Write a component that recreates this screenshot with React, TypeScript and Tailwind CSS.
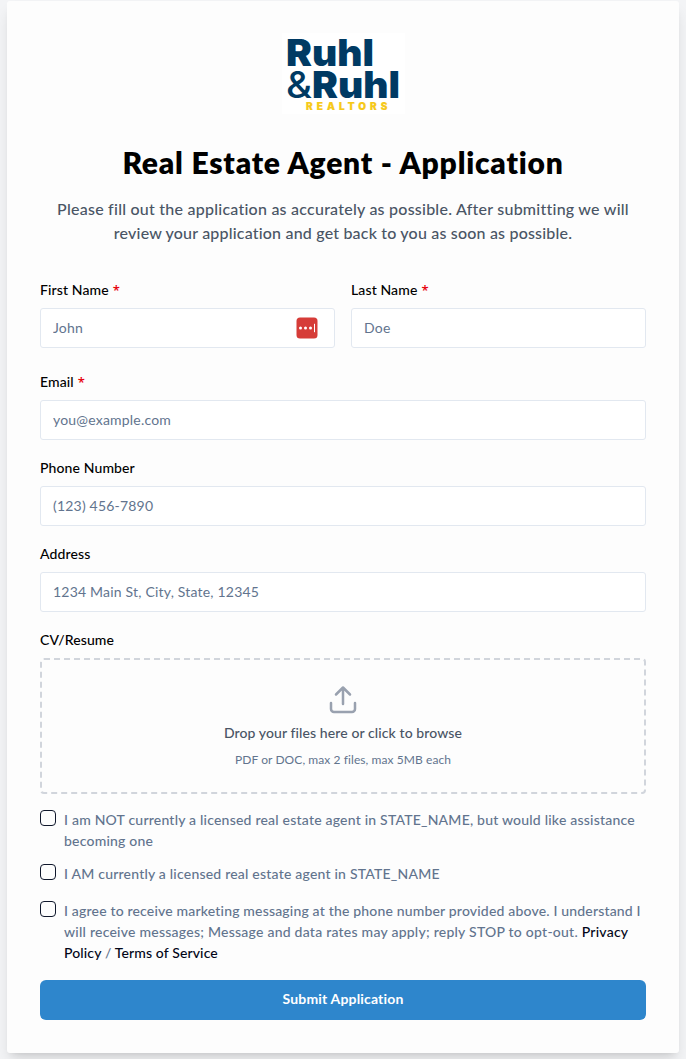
import type { ReactNode } from "react";

function Field({ label, placeholder, required, badge }: { label: string; placeholder: string; required?: boolean; badge?: ReactNode }) {
  return (
    <label className="block flex-1">
      <span className="flex h-5 items-center gap-1 text-sm font-medium tracking-[0.12px] text-black">
        {label}
        {required && <span className="font-['Open_Sans'] text-[13px] font-semibold text-red-600">*</span>}
      </span>
      <span className="mt-2 flex h-10 items-center rounded-[3px] border border-slate-200 bg-white pl-3 pr-4">
        <input placeholder={placeholder} className="min-w-0 flex-1 bg-transparent text-sm tracking-[0.2px] outline-none placeholder:text-slate-500" />
        {badge}
      </span>
    </label>
  );
}

function Check({ children }: { children: ReactNode }) {
  return (
    <div className="flex gap-2">
      <input type="checkbox" className="h-4 w-4 shrink-0 appearance-none rounded border border-slate-900" />
      <div className="-mt-px mb-px text-sm leading-[21px] font-medium tracking-[0.21px] whitespace-nowrap text-slate-500">{children}</div>
    </div>
  );
}

export default function App() {
  return (
    <div className="h-[1059px] overflow-hidden bg-[#f3f4f6] px-[7px] pt-px font-['Lato','Noto_Sans',sans-serif]">
      <main className="h-[1052px] rounded-[3px] bg-[#fdfdfd] px-[33px] pt-8 shadow-[0_10px_15px_-3px_rgb(0_0_0/0.12),0_4px_6px_-4px_rgb(0_0_0/0.12)]">
        <svg viewBox="0 0 123 81" className="mx-auto h-[81px] w-[123px] overflow-visible" fontFamily="Inter, sans-serif">
          <rect width="123" height="81" fill="#fff" />
          <g fill="#003a63" fontWeight="900">
            <text x="4" y="33" fontSize="37" textLength="88" lengthAdjust="spacingAndGlyphs">Ruhl</text>
            <text x="4" y="65" fontSize="37" fontWeight="500" textLength="26" lengthAdjust="spacingAndGlyphs">&amp;</text>
            <text x="30" y="65" fontSize="37" textLength="88" lengthAdjust="spacingAndGlyphs">Ruhl</text>
          </g>
          <text x="24" y="77" fontSize="10" fontWeight="900" fill="#f6c919" stroke="#f6c919" strokeWidth=".2" textLength="81.5">REALTORS</text>
        </svg>
        <h1 className="mt-[30px] text-center text-[30px] leading-9 font-extrabold tracking-[0.78px] whitespace-nowrap text-black">Real Estate Agent - Application</h1>
        <p className="mt-[17px] text-center text-base leading-6 font-medium whitespace-nowrap text-gray-600">
          <span className="block tracking-[0.235px]">Please fill out the application as accurately as possible. After submitting we will</span>
          <span className="block tracking-[0.19px]">review your application and get back to you as soon as possible.</span>
        </p>
        <form className="mt-[35px]">
          <div className="flex gap-4">
            <Field
              label="First Name"
              placeholder="John"
              required
              badge={
                <svg viewBox="0 0 22 22" className="h-[22px] w-[22px]">
                  <rect x=".5" y=".5" width="21" height="21" rx="3.5" fill="#d63c38" />
                  <g fill="#fff">
                    <circle cx="4.5" cy="11" r="1.5" />
                    <circle cx="9.5" cy="11" r="1.5" />
                    <circle cx="14.5" cy="11" r="1.5" />
                    <rect x="18" y="6.8" width="1" height="8.4" />
                  </g>
                </svg>
              }
            />
            <Field label="Last Name" placeholder="Doe" required />
          </div>
          <div className="mt-6 flex flex-col gap-[18px]">
            <Field label="Email" placeholder="you@example.com" required />
            <Field label="Phone Number" placeholder="(123) 456-7890" />
            <Field label="Address" placeholder="1234 Main St, City, State, 12345" />
            <div>
              <div className="h-5 text-sm leading-5 font-medium tracking-[0.12px] text-black">CV/Resume</div>
              <div className="mt-2 flex h-[136px] flex-col items-center rounded border-2 border-dashed border-gray-300 pt-6">
                <svg viewBox="0 0 32 32" className="h-8 w-8 fill-none stroke-gray-400" strokeWidth="2.5" strokeLinecap="round" strokeLinejoin="round">
                  <path d="M16 20V4M9 10.5l7-7 7 7M4 19v6a3 3 0 0 0 3 3h18a3 3 0 0 0 3-3v-6" />
                </svg>
                <div className="mt-[7px] text-sm leading-5 font-medium tracking-[0.1px] whitespace-nowrap text-gray-600">Drop your files here or click to browse</div>
                <div className="mt-[9px] text-xs leading-4 tracking-[0.08px] whitespace-nowrap text-slate-500">PDF or DOC, max 2 files, max 5MB each</div>
              </div>
            </div>
          </div>
          <div className="mt-4 flex flex-col gap-3">
            <Check>
              <span className="block">I am NOT currently a licensed real estate agent in STATE_NAME, but would like assistance</span>
              <span className="block">becoming one</span>
            </Check>
            <Check>
              <span className="block">I AM currently a licensed real estate agent in STATE_NAME</span>
            </Check>
            <div className="mt-1">
              <Check>
                <span className="block tracking-[0.175px]">I agree to receive marketing messaging at the phone number provided above. I understand I</span>
                <span className="block tracking-[0.24px]">will receive messages; Message and data rates may apply; reply STOP to opt-out. <a className="text-slate-950">Privacy</a></span>
                <span className="block tracking-[0.13px]"><a className="text-slate-950">Policy</a> / <a className="text-slate-950">Terms of Service</a></span>
              </Check>
            </div>
          </div>
          <button type="button" className="mt-4 block h-10 w-full rounded-md bg-[#2e86cc] pb-0.5 text-sm font-bold tracking-[0.17px] text-white">Submit Application</button>
        </form>
      </main>
    </div>
  );
}
